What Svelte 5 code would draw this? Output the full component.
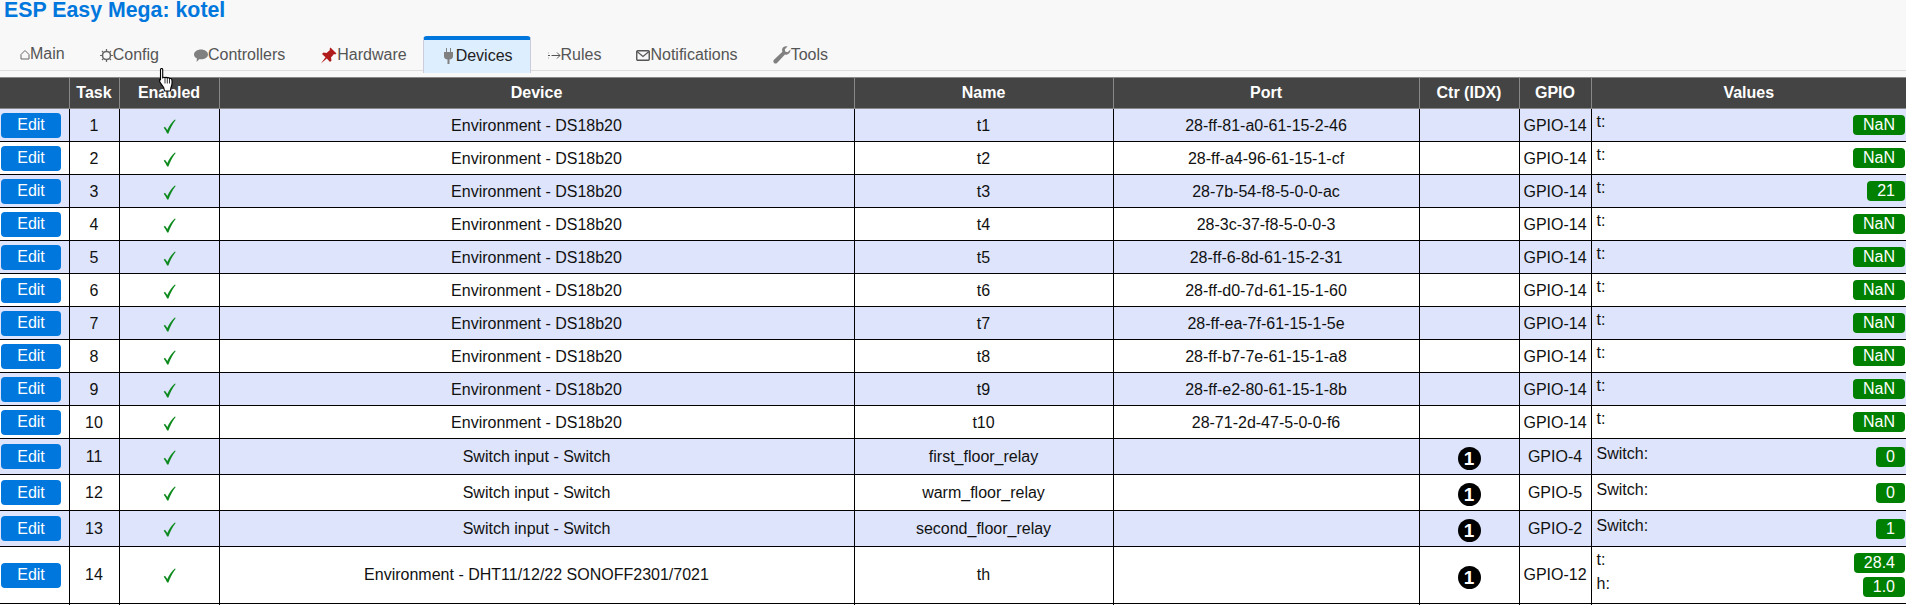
<script>
  const ports = [
    '28-ff-81-a0-61-15-2-46', '28-ff-a4-96-61-15-1-cf', '28-7b-54-f8-5-0-0-ac', '28-3c-37-f8-5-0-0-3',
    '28-ff-6-8d-61-15-2-31', '28-ff-d0-7d-61-15-1-60', '28-ff-ea-7f-61-15-1-5e', '28-ff-b7-7e-61-15-1-a8',
    '28-ff-e2-80-61-15-1-8b', '28-71-2d-47-5-0-0-f6'
  ];
  const nanVals = ['NaN', 'NaN', '21', 'NaN', 'NaN', 'NaN', 'NaN', 'NaN', 'NaN', 'NaN'];

  const rows = [
    ...ports.map((port, i) => ({
      task: i + 1, device: 'Environment - DS18b20', name: 't' + (i + 1), port, ctr: false,
      gpio: 'GPIO-14', values: [['t:', nanVals[i]]]
    })),
    { task: 11, device: 'Switch input - Switch', name: 'first_floor_relay', port: '', ctr: true, gpio: 'GPIO-4', values: [['Switch:', '0']] },
    { task: 12, device: 'Switch input - Switch', name: 'warm_floor_relay', port: '', ctr: true, gpio: 'GPIO-5', values: [['Switch:', '0']] },
    { task: 13, device: 'Switch input - Switch', name: 'second_floor_relay', port: '', ctr: true, gpio: 'GPIO-2', values: [['Switch:', '1']] },
    { task: 14, device: 'Environment - DHT11/12/22 SONOFF2301/7021', name: 'th', port: '', ctr: true, gpio: 'GPIO-12', values: [['t:', '28.4'], ['h:', '1.0']] }
  ];

  const widths = [69, 50, 100, 635, 259, 306, 100, 72, 315];
  const heads = ['', 'Task', 'Enabled', 'Device', 'Name', 'Port', 'Ctr (IDX)', 'GPIO', 'Values'];
</script>

<div class="top">
  <h1>ESP Easy Mega: kotel</h1>
  <nav class="tabs">
    <a class="tab main-tab">
      <svg width="10" height="11" viewBox="0 0 10 11"><path d="M1 5.500 5 1.500 9 5.500V10H1z" fill="none" stroke="#666" stroke-width="1"/></svg>
      <span>Main</span>
    </a>
    <a class="tab">
      <svg width="13" height="13" viewBox="0 0 13 13"><circle cx="6.500" cy="6.500" r="4" fill="none" stroke="#666" stroke-width="1.600"/><path d="M6.500 0v2.500M6.500 10.500V13M0 6.500h2.500M10.500 6.500H13M2 2l1.600 1.600M9.400 9.400 11 11M11 2 9.400 3.600M3.600 9.400 2 11" stroke="#666" stroke-width="1.200"/></svg>
      <span>Config</span>
    </a>
    <a class="tab">
      <svg width="14" height="15" viewBox="0 0 15 15"><path d="M7.500 1C11.600 1 15 3.400 15 6.300c0 3-3.400 5.300-7.500 5.300-.7 0-1.300 0-2-.2L2.800 14.500l.3-4C1.200 9.500 0 8 0 6.300 0 3.400 3.400 1 7.500 1z" fill="#808080"/></svg>
      <span>Controllers</span>
    </a>
    <a class="tab">
      <svg width="17" height="17" viewBox="0 0 17 17"><path d="M10.500.5 16.500 6.500 15 7.500 14 7 11 10.500 11.500 13.500 10 15 6.800 11.500 1 16.500 5.500 10.200 2 7 3.500 5.500 6.500 6 10 3 9.500 2z" fill="#b01c1c"/></svg>
      <span>Hardware</span>
    </a>
    <a class="tab active">
      <svg width="9" height="16" viewBox="0 0 9 16"><path d="M2 0h1v4h3V0h1v4h2v4.500C9 10.500 7 11.500 5.500 11.500V16h-2v-4.500C2 11.500 0 10.500 0 8.500V4h2z" fill="#808080"/></svg>
      <span>Devices</span>
    </a>
    <a class="tab">
      <svg width="13" height="9" viewBox="0 0 13 9"><path d="M0 4.500h2M3.500 4.500h8.500M9 1.500l3 3-3 3M0 1.500v1M0 6.500v1" fill="none" stroke="#555" stroke-width="1"/></svg>
      <span>Rules</span>
    </a>
    <a class="tab">
      <svg width="14" height="11" viewBox="0 0 14 11"><rect x=".75" y=".75" width="12.500" height="9.500" rx="1" fill="none" stroke="#555" stroke-width="1.400"/><path d="M1 1.500 7 6.500l6-5" fill="none" stroke="#555" stroke-width="1.200"/></svg>
      <span>Notifications</span>
    </a>
    <a class="tab">
      <svg width="18" height="18" viewBox="0 0 18 18"><path d="M17.500 3.500 14.500 6.200 12.200 5.500 11.800 3.300 14.500.6C12.300-.2 9.800.8 9.200 3c-.3 1-.2 2 .2 2.800L1 13.800C0 14.800.2 16 1 16.900c.9.800 2.100.9 3 0l8-8.300c2.700 1 5.700-1.300 5.500-5.100z" fill="#808080"/></svg>
      <span>Tools</span>
    </a>
  </nav>
</div>

<table>
  <colgroup>
    {#each widths as w}<col style="width:{w}px" />{/each}
  </colgroup>
  <thead>
    <tr>{#each heads as h}<th>{h}</th>{/each}</tr>
  </thead>
  <tbody>
    {#each rows as r}
      <tr class:short={!r.ctr}>
        <td class="edit"><button>Edit</button></td>
        <td>{r.task}</td>
        <td>
          <svg class="check" width="13" height="15" viewBox="0 0 12 14"><path d="M.6 8.200 1.800 7.200 4 10.200C5.700 6.500 8 3 11 .4l.8.500C8.900 4.600 6.500 9 5 13.500H3.800C3 11.500 1.900 9.800.6 8.200z" fill="#0e8a1e"/></svg>
        </td>
        <td>{r.device}</td>
        <td>{r.name}</td>
        <td>{r.port}</td>
        <td>{#if r.ctr}<span class="idx">1</span>{/if}</td>
        <td>{r.gpio}</td>
        <td class="vals">
          {#each r.values as [label, val]}
            <div class="val-row"><span>{label}</span><span class="badge">{val}</span></div>
          {/each}
        </td>
      </tr>
    {/each}
    <tr>{#each heads as h}<td class="blank"></td>{/each}</tr>
  </tbody>
</table>

<!-- mouse pointer caught in the screenshot -->
<svg class="cursor" width="16" height="25" viewBox="0 0 16 25">
  <path d="M1.500 1.500c0-1.300 2.200-1.300 2.200 0V10c.4-1 2-1 2.300 0 .3-.9 2-.9 2.300.2.400-.8 2-.7 2.200.5.600-.5 2-.3 2.300.8.500 3 .3 6-1 8.500l-.3 3H5.500l-.8-3.500C3 17 .8 14.500.4 13c-.4-1.300 1-2.300 1.100-1z" fill="#fff" stroke="#000" stroke-width="1.100" stroke-linejoin="round"/>
  <path d="M6 10.500v5M8.300 10.500v5M10.500 11v4.500" stroke="#000" stroke-width=".8"/>
</svg>

<style>
  :global(body) {
    background: #fff;
    overflow: hidden;
    font-family: "Liberation Sans", Arial, sans-serif;
    font-size: 16px;
    color: #111;
  }

  .top {
    background: #f8f8f8;
    padding-bottom: 6px;
  }

  h1 {
    margin: 0;
    padding-left: 4px;
    font-size: 21.33px;
    line-height: 20px;
    font-weight: bold;
    color: #0077dd;
  }

  .tabs {
    display: flex;
    gap: 1px;
    height: 34px;
    margin-top: 16px;
    padding-left: 3px;
    border-bottom: 1px solid #ddd;
  }

  .tab {
    display: flex;
    align-items: center;
    box-sizing: border-box;
    height: 34px;
    padding: 4px 17px 0;
    color: #555;
    white-space: nowrap;
  }

  .main-tab span,
  .main-tab svg {
    margin-bottom: 2px;
  }

  .tab.active {
    height: 37px;
    margin: 0 -1px 0 -2px;
    padding: 0 17px 2px 20px;
    background: #ddeeff;
    color: #222;
    border-top: 4px solid #0077dd;
    border-left: 1px solid #ccd;
    border-right: 1px solid #ccd;
    border-radius: 4px 4px 0 0;
  }

  .tab.active svg {
    margin-right: 3px;
  }

  table {
    width: 1906px;
    border-collapse: collapse;
    table-layout: fixed;
  }

  th {
    padding: 6px 4px;
    background: #444;
    color: #fff;
    border: 1px solid #888;
    font-weight: bold;
    line-height: 18px;
  }

  th:first-child { border-left: none; }
  th:last-child { border-right: none; }

  td {
    padding: 4px;
    border: 1px solid #000;
    text-align: center;
    white-space: nowrap;
    line-height: 18px;
  }

  tr.short td {
    padding-top: 5px;
    padding-bottom: 3px;
  }

  td:first-child { border-left: none; }
  td:last-child { border-right: none; }

  tbody tr:nth-child(odd) td {
    background: #dde4fb;
  }

  td.blank { height: 24px; background: #fff !important; }

  td.edit,
  tr.short td.edit {
    padding: 0 1px;
  }

  button {
    display: block;
    width: 60px;
    height: 25px;
    padding: 0;
    border: none;
    border-radius: 4px;
    background: #0077dd;
    color: #fff;
    font: 16px "Liberation Sans", Arial, sans-serif;
  }

  .check {
    display: block;
    margin: 1px auto 0;
  }

  tr.short .check {
    margin-top: 0;
  }

  .idx {
    display: block;
    width: 23px;
    height: 23px;
    margin: 4px auto 0;
    border-radius: 50%;
    background: #000;
    color: #fff;
    font-weight: bold;
    font-size: 19px;
    line-height: 23px;
  }

  td.vals,
  tr.short td.vals {
    padding: 4px 0 4px 5px;
    text-align: left;
  }

  .val-row {
    display: flex;
    justify-content: space-between;
    align-items: flex-start;
    height: 24px;
  }

  .badge {
    height: 20px;
    margin: 2px 1px 0 0;
    padding: 0 10px;
    border-radius: 4px;
    background: #008000;
    color: #fff;
    line-height: 20px;
  }

  .cursor {
    position: absolute;
    left: 159px;
    top: 68px;
  }
</style>
